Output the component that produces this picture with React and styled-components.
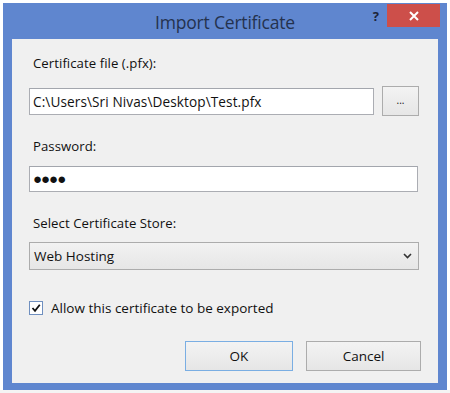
import React from "react";
import styled, { createGlobalStyle } from "styled-components";

const Global = createGlobalStyle`
  html, body {
    margin: 0;
    padding: 0;
    background: #ffffff;
  }
  body {
    font-family: "Open Sans", "Noto Sans", "Liberation Sans", sans-serif;
    font-size: 13px;
    color: #111;
  }
`;

const Page = styled.div`
  width: 450px;
  height: 393px;
  padding: 3px 0 0 3px;
  box-sizing: border-box;
  background: linear-gradient(#ffffff 0 390px, #f4f4f4 390px);
`;

const Window = styled.div`
  width: 444px;
  height: 387px;
  background: #5f86cf;
  display: flex;
  flex-direction: column;
  box-sizing: border-box;
  padding: 0 9px 7px 9px;
`;

const TitleBar = styled.div`
  height: 36px;
  position: relative;
  display: flex;
  align-items: center;
  justify-content: center;
`;

const Title = styled.div`
  font-size: 17.5px;
  color: #24324e;
  margin-top: 2px;
  letter-spacing: -0.2px;
`;

const Help = styled.span`
  position: absolute;
  right: 59px;
  top: 4px;
  font-weight: 700;
  font-size: 13px;
  color: #1c2438;
`;

const Close = styled.div`
  position: absolute;
  right: -2px;
  top: 1px;
  width: 53px;
  height: 23px;
  background: #cd4f4a;
  display: flex;
  align-items: center;
  justify-content: center;
`;

const Content = styled.div`
  flex: 1;
  background: #f0f0f0;
  padding: 16px 19px 0 17px;
  display: flex;
  flex-direction: column;
`;

const Label = styled.div`
  padding-left: 4px;
  line-height: 16px;
  height: 16px;
  font-size: 13.2px;
  letter-spacing: 0.05px;
  margin-bottom: ${(p) => p.$gap}px;
`;

const Row = styled.div`
  display: flex;
  align-items: center;
  gap: 8px;
`;

const Field = styled.div`
  flex: 1;
  height: ${(p) => p.$h}px;
  box-sizing: border-box;
  background: #ffffff;
  border: 1px solid #abadb3;
  border-top-color: #a3a6ad;
  display: flex;
  align-items: center;
  padding-left: 3px;
  font-size: 13.6px;
  color: #111;
  letter-spacing: 0.1px;
`;

const Dots = styled.span`
  font-size: 15px;
  letter-spacing: -1px;
  line-height: 1;
  margin-top: -2px;
`;

const Button = styled.div`
  width: ${(p) => p.$w}px;
  height: 30px;
  box-sizing: border-box;
  border: 1px solid ${(p) => (p.$focus ? "#7aaee3" : "#acacac")};
  background: linear-gradient(#f3f3f3, #e6e6e6);
  display: flex;
  align-items: center;
  justify-content: center;
  font-size: 13.5px;
  color: #111;
`;

const Select = styled.div`
  height: 28px;
  box-sizing: border-box;
  border: 1px solid #acacac;
  background: linear-gradient(#f2f2f2, #e6e6e6);
  display: flex;
  align-items: center;
  justify-content: space-between;
  padding: 0 6px 0 4px;
  font-size: 13.5px;
  color: #111;
`;

const Check = styled.div`
  display: flex;
  align-items: center;
  gap: 8px;
  margin-top: 29px;
  font-size: 13.5px;
`;

const Box = styled.div`
  width: 14px;
  height: 14px;
  box-sizing: border-box;
  border: 1px solid #6f8fbf;
  background: #ffffff;
  display: flex;
  align-items: center;
  justify-content: center;
`;

const Actions = styled.div`
  display: flex;
  justify-content: flex-end;
  gap: 13px;
  margin-top: 24px;
  margin-right: -2px;
`;

export default function App() {
  return (
    <>
      <Global />
      <Page>
        <Window>
          <TitleBar>
            <Title>Import Certificate</Title>
            <Help>?</Help>
            <Close>
              <svg width="10" height="10" viewBox="0 0 10 10">
                <path d="M1 1 L9 9 M9 1 L1 9" stroke="#fff" strokeWidth="2" />
              </svg>
            </Close>
          </TitleBar>
          <Content>
            <Label $gap={15}>Certificate file (.pfx):</Label>
            <Row>
              <Field $h={27}>C:\Users\Sri Nivas\Desktop\Test.pfx</Field>
              <Button $w={37}>
                <span style={{ fontSize: 10, marginTop: -2 }}>...</span>
              </Button>
            </Row>
            <Label $gap={12} style={{ marginTop: 22 }}>
              Password:
            </Label>
            <Field $h={26} style={{ flex: "none", marginRight: 1 }}>
              <Dots>●●●●</Dots>
            </Field>
            <Label $gap={11} style={{ marginTop: 23 }}>
              Select Certificate Store:
            </Label>
            <Select>
              <span>Web Hosting</span>
              <svg width="9" height="6" viewBox="0 0 9 6">
                <path d="M1 1 L4.5 4.5 L8 1" stroke="#333" strokeWidth="1.6" fill="none" />
              </svg>
            </Select>
            <Check>
              <Box>
                <svg width="10" height="10" viewBox="0 0 10 10">
                  <path d="M1.5 5 L4 7.8 L8.8 1.8" stroke="#111" strokeWidth="1.8" fill="none" />
                </svg>
              </Box>
              <span>Allow this certificate to be exported</span>
            </Check>
            <Actions>
              <Button $w={108} $focus>
                OK
              </Button>
              <Button $w={115}>Cancel</Button>
            </Actions>
          </Content>
        </Window>
      </Page>
    </>
  );
}
